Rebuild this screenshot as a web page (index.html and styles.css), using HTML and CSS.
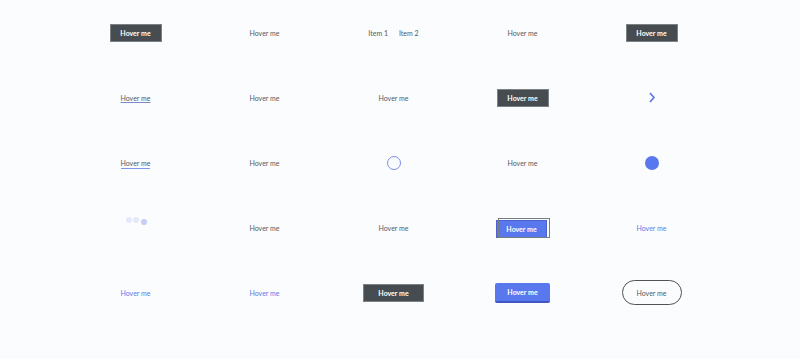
FILE: index.html
```html
<!DOCTYPE html>
<html lang="en">
<head>
  <meta charset="UTF-8">
  <meta name="viewport" content="width=device-width, initial-scale=1.0">
  <title>Hover Effects</title>
  <link rel="stylesheet" href="styles.css">
</head>
<body>
  <div class="grid">
    <!-- Row 1 -->
    <div class="cell"><button class="btn-dark">Hover me</button></div>
    <div class="cell"><span class="label">Hover me</span></div>
    <div class="cell">
      <div class="menu">
        <span class="label">Item 1</span>
        <span class="label">Item 2</span>
      </div>
    </div>
    <div class="cell"><span class="label">Hover me</span></div>
    <div class="cell"><button class="btn-dark">Hover me</button></div>

    <!-- Row 2 -->
    <div class="cell"><a class="link-under" href="#">Hover me</a></div>
    <div class="cell"><span class="label">Hover me</span></div>
    <div class="cell"><span class="label">Hover me</span></div>
    <div class="cell"><button class="btn-dark">Hover me</button></div>
    <div class="cell">
      <svg class="chevron" width="8" height="11" viewBox="0 0 8 11">
        <path d="M2 1 L6 5.5 L2 10" fill="none" stroke="#5a73e0" stroke-width="1.6"/>
      </svg>
    </div>

    <!-- Row 3 -->
    <div class="cell"><a class="link-blue-line" href="#">Hover me</a></div>
    <div class="cell"><span class="label">Hover me</span></div>
    <div class="cell"><span class="ring"></span></div>
    <div class="cell"><span class="label">Hover me</span></div>
    <div class="cell"><span class="dot"></span></div>

    <!-- Row 4 -->
    <div class="cell">
      <div class="loader">
        <span></span><span></span><span class="active"></span>
      </div>
    </div>
    <div class="cell"><span class="label">Hover me</span></div>
    <div class="cell"><span class="label">Hover me</span></div>
    <div class="cell"><button class="btn-offset">Hover me</button></div>
    <div class="cell"><span class="label blue">Hover me</span></div>

    <!-- Row 5 -->
    <div class="cell"><span class="label blue">Hover me</span></div>
    <div class="cell"><span class="label blue">Hover me</span></div>
    <div class="cell"><button class="btn-dark wide">Hover me</button></div>
    <div class="cell"><button class="btn-blue">Hover me</button></div>
    <div class="cell"><button class="btn-pill">Hover me</button></div>
  </div>
</body>
</html>
```

FILE: styles.css
```css
body {
  margin: 0;
  background-color: #fbfcfe;
  font-family: Lato, "Open Sans", sans-serif;
  font-size: 7px;
  color: #555a5e;
}

.grid {
  display: grid;
  grid-template-columns: repeat(5, 129px);
  grid-auto-rows: 65px;
  padding-left: 71px;
}

.cell {
  display: flex;
  align-items: center;
  justify-content: center;
}

.label {
  color: #555a5e;
}

.label.blue {
  color: #6179e6;
}

.menu {
  display: flex;
  gap: 11px;
}

button {
  font-family: inherit;
  font-size: 7px;
  cursor: pointer;
}

.btn-dark {
  width: 52px;
  height: 18px;
  padding: 0;
  color: #fff;
  background-color: #464c4f;
  border: 1px solid #7b8184;
  font-weight: bold;
}

.btn-dark.wide {
  width: 61px;
}

.link-under {
  color: #555a5e;
  text-decoration: underline;
  text-decoration-color: #7d8ad0;
  text-underline-offset: 1px;
}

.link-blue-line {
  color: #555a5e;
  text-decoration: none;
  border-bottom: 1px solid #7f96ee;
  padding-bottom: 1px;
  margin-top: 2px;
}

.chevron {
  display: block;
}

.ring {
  width: 12px;
  height: 12px;
  border: 1.5px solid #7b8fe8;
  border-radius: 50%;
}

.dot {
  width: 14px;
  height: 14px;
  background-color: #5a78ee;
  border-radius: 50%;
}

.loader {
  display: flex;
  gap: 1.5px;
  margin-bottom: 14px;
  margin-left: 1px;
}

.loader span {
  width: 6px;
  height: 6px;
  border-radius: 50%;
  background-color: #e4e8fb;
}

.loader span.active {
  background-color: #c6cdf6;
  margin-top: 2px;
}

.btn-offset {
  position: relative;
  width: 51px;
  height: 18px;
  padding: 0;
  margin-top: 2px;
  margin-right: 2px;
  color: #fff;
  background-color: #5a78ee;
  border: 1px solid #4a63cf;
  font-weight: bold;
}

.btn-offset::before {
  content: "";
  position: absolute;
  left: 1px;
  top: -3px;
  width: 50px;
  height: 18px;
  border: 1px solid #777c80;
}

.btn-blue {
  width: 55px;
  height: 20px;
  padding: 0;
  color: #fff;
  background-color: #5a78ee;
  border: none;
  border-bottom: 2px solid #3f56c4;
  border-radius: 2px;
  font-weight: bold;
}

.btn-pill {
  width: 60px;
  height: 25px;
  padding: 0;
  color: #555a5e;
  background: transparent;
  border: 1.5px solid #4f5457;
  border-radius: 13px;
}
```
